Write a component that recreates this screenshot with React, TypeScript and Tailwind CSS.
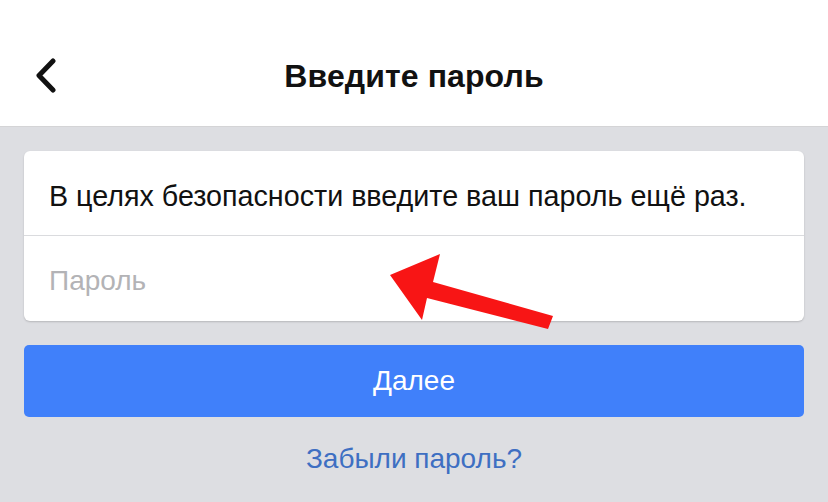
import React from "react";

export default function App() {
  return (
    <div
      className="relative w-[828px] h-[502px] overflow-hidden bg-[#dddee2]"
      style={{ fontFamily: '"Liberation Sans", Arial, sans-serif' }}
    >
      <header className="h-[127px] pt-[50px] bg-white border-b border-[#d4d4d6]">
        <div className="relative h-[52px] flex items-center justify-center">
          <svg
            className="absolute left-[34px] top-[8px]"
            width="26"
            height="36"
            viewBox="0 0 26 36"
          >
            <path
              d="M19 3 L5 17.5 L19 32"
              fill="none"
              stroke="#111"
              strokeWidth="5"
              strokeLinecap="round"
              strokeLinejoin="round"
            />
          </svg>
          <h1 className="text-[32px] leading-[40px] font-bold text-[#111] tracking-[0.1px]">
            Введите пароль
          </h1>
        </div>
      </header>

      <main className="px-[24px] pt-[24px]">
        <div className="bg-white rounded-[6px] shadow-[0_1px_2px_rgba(0,0,0,0.18)] overflow-hidden">
          <div className="h-[85px] flex items-center px-[25px] pt-[6px] border-b border-[#dadbde]">
            <p className="text-[28.7px] leading-[34px] text-[#111]">
              В целях безопасности введите ваш пароль ещё раз.
            </p>
          </div>
          <div className="h-[85px] flex items-center px-[25px] pt-[4px]">
            <span className="text-[28px] leading-[34px] text-[#b3b3b6]">Пароль</span>
          </div>
        </div>

        <button className="mt-[24px] w-full h-[72px] rounded-[5px] bg-[#4080fa] text-white text-[28px] leading-[34px] flex items-center justify-center">
          Далее
        </button>

        <div className="mt-[25px] flex justify-center">
          <span className="text-[28px] leading-[34px] text-[#3e6fc2]">Забыли пароль?</span>
        </div>
      </main>

      <svg
        className="absolute left-0 top-0"
        width="828"
        height="502"
        viewBox="0 0 828 502"
      >
        <polygon
          points="390,275 440,254 433,282 553,316 548,329 427,298 422,320"
          fill="#f81515"
        />
      </svg>
    </div>
  );
}
